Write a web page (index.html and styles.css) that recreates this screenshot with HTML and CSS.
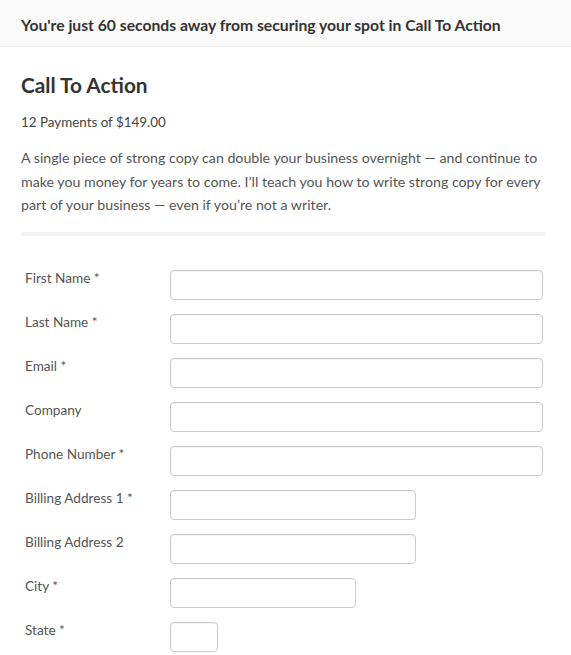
FILE: index.html
```html
<!DOCTYPE html>
<html>
<head>
<meta charset="utf-8">
<link rel="stylesheet" href="styles.css">
</head>
<body>
<div class="topbar">You're just 60 seconds away from securing your spot in Call To Action</div>
<div class="content">
  <h1 class="title">Call To Action</h1>
  <p class="price">12 Payments of $149.00</p>
  <p class="desc">A single piece of strong copy can double your business overnight — and continue to make you money for years to come. I’ll teach you how to write strong copy for every part of your business — even if you’re not a writer.</p>
  <div class="divider"></div>
  <form class="form">
    <div class="row"><label class="lbl">First Name *</label><input class="inp full" type="text"></div>
    <div class="row"><label class="lbl">Last Name *</label><input class="inp full" type="text"></div>
    <div class="row"><label class="lbl">Email *</label><input class="inp full" type="text"></div>
    <div class="row"><label class="lbl">Company</label><input class="inp full" type="text"></div>
    <div class="row"><label class="lbl">Phone Number *</label><input class="inp full" type="text"></div>
    <div class="row"><label class="lbl">Billing Address 1 *</label><input class="inp addr" type="text"></div>
    <div class="row"><label class="lbl">Billing Address 2</label><input class="inp addr" type="text"></div>
    <div class="row"><label class="lbl">City *</label><input class="inp city" type="text"></div>
    <div class="row"><label class="lbl">State *</label><input class="inp state" type="text"></div>
  </form>
</div>
</body>
</html>
```
FILE: styles.css
```css
html, body {
  margin: 0;
  padding: 0;
  background: #fff;
  font-family: Lato, "Liberation Sans", sans-serif;
  color: #444;
}
.topbar {
  box-sizing: content-box;
  height: 30px;
  background: #fafafa;
  border-bottom: 1px solid #ebebeb;
  padding: 16px 21px 0;
  font-size: 15.7px;
  font-weight: 700;
  color: #333;
  line-height: 18px;
}
.content {
  padding: 0 25px 0 21px;
}
.title {
  margin: 25px 0 0;
  font-size: 20.8px;
  font-weight: 700;
  color: #333;
  line-height: 25px;
}
.price {
  margin: 17px 0 0;
  font-size: 13.4px;
  line-height: 16px;
  color: #444;
}
.desc {
  margin: 16px 0 0;
  font-size: 14.2px;
  line-height: 23.5px;
  color: #555;
}
.divider {
  margin-top: 15px;
  height: 4px;
  background: #f3f3f3;
}
.form {
  padding-top: 34px;
  display: flex;
  flex-direction: column;
  gap: 14px;
}
.row {
  display: flex;
  align-items: flex-start;
}
.lbl {
  width: 145px;
  padding-left: 4px;
  padding-top: 0;
  font-size: 13.6px;
  line-height: 16px;
  color: #555;
}
.inp {
  height: 30px;
  box-sizing: border-box;
  border: 1px solid #cccccc;
  border-radius: 4px;
  background: #fff;
  box-shadow: inset 0 1px 1px rgba(0,0,0,0.05);
  margin: 0;
  padding: 0 8px;
  font-family: inherit;
}
.full { width: 373px; }
.addr { width: 246px; }
.city { width: 186px; }
.state { width: 48px; }
```
